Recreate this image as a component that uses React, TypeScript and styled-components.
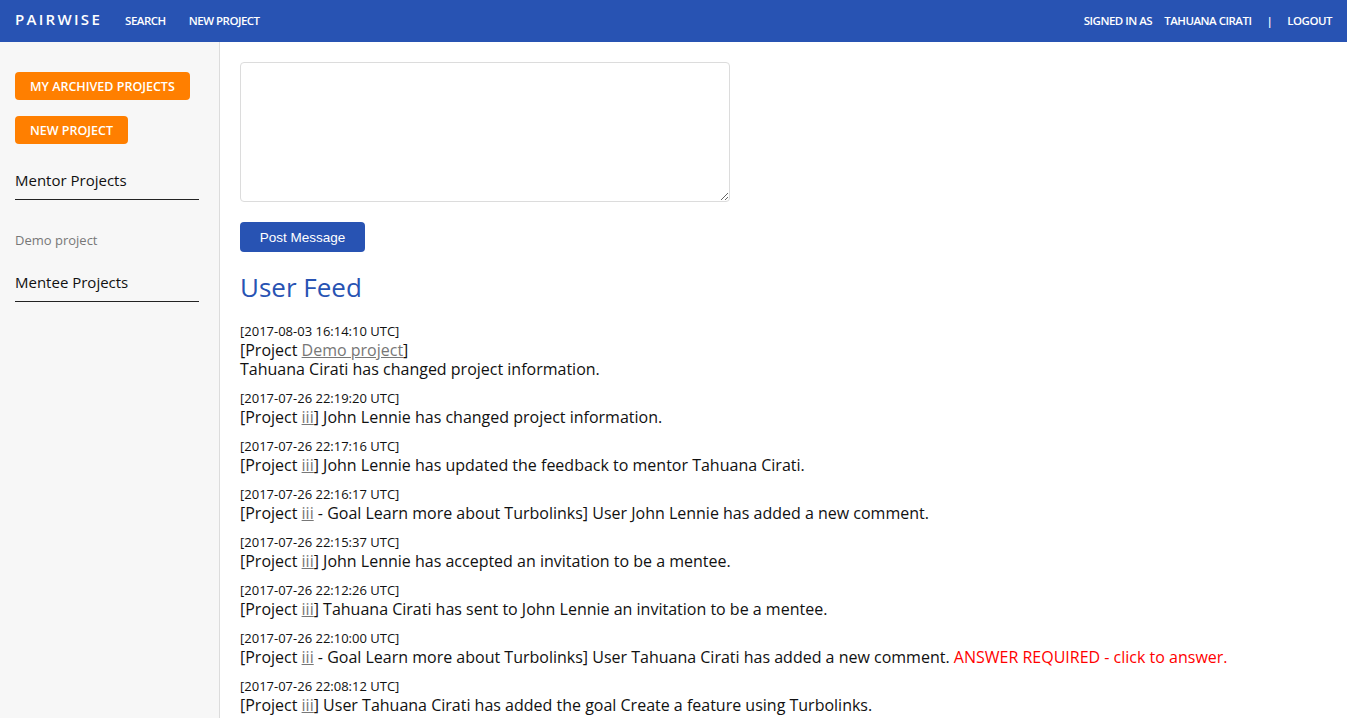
import React from 'react';
import styled, { createGlobalStyle } from 'styled-components';

const GlobalStyle = createGlobalStyle`
  html, body {
    margin: 0;
    padding: 0;
    height: 100%;
    overflow: hidden;
  }
  body {
    font-family: 'Open Sans', 'Noto Sans', sans-serif;
    color: #111;
    background: #fff;
  }
`;

interface FeedItem {
  time: string;
  project: string;
  goal?: string;
  text: string;
  answer?: boolean;
  breakLine?: boolean;
}

const feed: FeedItem[] = [
  { time: '2017-08-03 16:14:10 UTC', project: 'Demo project', text: 'Tahuana Cirati has changed project information.', breakLine: true },
  { time: '2017-07-26 22:19:20 UTC', project: 'iii', text: 'John Lennie has changed project information.' },
  { time: '2017-07-26 22:17:16 UTC', project: 'iii', text: 'John Lennie has updated the feedback to mentor Tahuana Cirati.' },
  { time: '2017-07-26 22:16:17 UTC', project: 'iii', goal: 'Learn more about Turbolinks', text: 'User John Lennie has added a new comment.' },
  { time: '2017-07-26 22:15:37 UTC', project: 'iii', text: 'John Lennie has accepted an invitation to be a mentee.' },
  { time: '2017-07-26 22:12:26 UTC', project: 'iii', text: 'Tahuana Cirati has sent to John Lennie an invitation to be a mentee.' },
  { time: '2017-07-26 22:10:00 UTC', project: 'iii', goal: 'Learn more about Turbolinks', text: 'User Tahuana Cirati has added a new comment.', answer: true },
  { time: '2017-07-26 22:08:12 UTC', project: 'iii', text: 'User Tahuana Cirati has added the goal Create a feature using Turbolinks.' },
];

const App = () => {
  return (
    <>
      <GlobalStyle />
      <NavBar>
        <NavLeft>
          <Brand>PAIRWISE</Brand>
          <NavLink>SEARCH</NavLink>
          <NavLink>NEW PROJECT</NavLink>
        </NavLeft>
        <NavRight>
          <NavText>SIGNED IN AS</NavText>
          <NavText $gap={15}>TAHUANA CIRATI</NavText>
          <NavText $gap={15}>|</NavText>
          <NavLink>LOGOUT</NavLink>
        </NavRight>
      </NavBar>
      <Layout>
        <Sidebar>
          <OrangeButton>MY ARCHIVED PROJECTS</OrangeButton>
          <OrangeButton>NEW PROJECT</OrangeButton>
          <SectionTitle>Mentor Projects</SectionTitle>
          <ProjectLink>Demo project</ProjectLink>
          <SectionTitle>Mentee Projects</SectionTitle>
        </Sidebar>
        <Main>
          <MessageBox />
          <PostButton>Post Message</PostButton>
          <FeedTitle>User Feed</FeedTitle>
          <FeedList>
            {feed.map((item, i) => (
              <Entry key={i}>
                <Stamp>[{item.time}]</Stamp>
                <Line>
                  [Project <FeedLink>{item.project}</FeedLink>
                  {item.goal ? ` - Goal ${item.goal}` : ''}]
                  {item.breakLine ? <br /> : ' '}
                  {item.text}
                  {item.answer && <Answer> ANSWER REQUIRED - click to answer.</Answer>}
                </Line>
              </Entry>
            ))}
          </FeedList>
        </Main>
      </Layout>
    </>
  );
};

export default App;

const NavBar = styled.nav`
  height: 42px;
  background: #2853b3;
  display: flex;
  align-items: center;
  justify-content: space-between;
  padding: 0 15px;
  color: #fff;
`;
const NavLeft = styled.div`
  display: flex;
  align-items: center;
  margin-top: -2px;
`;
const NavRight = styled.div`
  display: flex;
  align-items: center;
  margin-top: -2px;
`;
const Brand = styled.div`
  font-size: 15px;
  font-weight: 600;
  letter-spacing: 2.3px;
  margin-right: 23px;
  margin-top: -2px;
`;
const NavLink = styled.a`
  font-size: 11.5px;
  font-weight: 600;
  letter-spacing: -0.5px;
  margin-right: 23px;
  cursor: pointer;
  &:last-child {
    margin-right: 0;
  }
`;
const NavText = styled.span<{ $gap?: number }>`
  font-size: 11.5px;
  font-weight: 600;
  letter-spacing: -0.5px;
  margin-right: ${p => p.$gap ?? 12}px;
`;
const Layout = styled.div`
  display: flex;
  height: calc(100vh - 42px);
`;
const Sidebar = styled.aside`
  width: 220px;
  flex-shrink: 0;
  box-sizing: border-box;
  background: #f7f7f7;
  border-right: 1px solid #dcdcdc;
  padding: 30px 20px 0 15px;
  display: flex;
  flex-direction: column;
  align-items: flex-start;
`;
const OrangeButton = styled.button`
  background: #ff7f00;
  color: #fff;
  border: none;
  border-radius: 4px;
  height: 28px;
  padding: 0 15px;
  font-family: 'Open Sans', sans-serif;
  font-size: 12.5px;
  font-weight: 600;
  margin-bottom: 16px;
`;
const SectionTitle = styled.div`
  align-self: stretch;
  font-size: 15px;
  line-height: 20px;
  padding: 10px 0 9px;
  border-bottom: 1px solid #222;
  margin: 0 0 31px;
`;
const ProjectLink = styled.a`
  font-size: 13px;
  color: #777;
  line-height: 18px;
  margin-bottom: 13px;
`;
const Main = styled.main`
  flex: 1;
  padding: 20px 20px 0 20px;
  overflow: hidden;
`;
const MessageBox = styled.textarea`
  display: block;
  width: 490px;
  height: 140px;
  box-sizing: border-box;
  border: 1px solid #dcdcdc;
  border-radius: 4px;
  resize: vertical;
  margin: 0 0 20px;
`;
const PostButton = styled.button`
  background: #2853b3;
  color: #fff;
  border: none;
  border-radius: 4px;
  width: 125px;
  height: 30px;
  font-family: 'Liberation Sans', Arial, sans-serif;
  font-size: 13.5px;
`;
const FeedTitle = styled.h2`
  font-size: 26px;
  font-weight: 400;
  color: #2853b3;
  margin: 17px 0 16px;
  line-height: 36px;
`;
const FeedList = styled.div`
  display: flex;
  flex-direction: column;
  gap: 9px;
`;
const Entry = styled.div``;
const Stamp = styled.div`
  font-size: 13px;
  line-height: 20px;
`;
const Line = styled.div`
  font-size: 16px;
  line-height: 19px;
`;
const FeedLink = styled.a`
  color: #777;
  text-decoration: underline;
`;
const Answer = styled.span`
  color: #f00;
`;
